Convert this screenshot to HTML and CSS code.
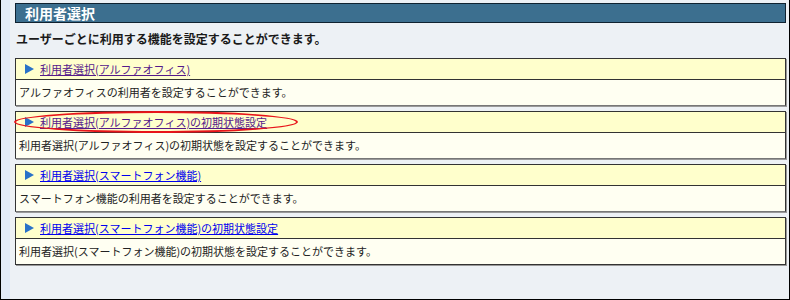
FILE: index.html
```html
<!DOCTYPE html>
<html lang="ja">
<head>
    <meta charset="UTF-8">
    <title>利用者選択</title>
    <link rel="stylesheet" href="styles.css">
</head>
<body>
<div class="frame">
    <div class="side"></div>
    <div class="main">
        <h1 class="title">利用者選択</h1>
        <p class="lead">ユーザーごとに利用する機能を設定することができます。</p>

        <div class="item">
            <div class="item-head">
                <svg class="arrow" width="9" height="10" viewBox="0 0 9 10"><polygon points="0,0 9,5 0,10" fill="#2a72c8"/></svg>
                <a href="#" class="visited">利用者選択(アルファオフィス)</a>
            </div>
            <div class="item-body">アルファオフィスの利用者を設定することができます。</div>
        </div>

        <div class="item">
            <div class="item-head">
                <svg class="arrow" width="9" height="10" viewBox="0 0 9 10"><polygon points="0,0 9,5 0,10" fill="#2a72c8"/></svg>
                <a href="#" class="visited">利用者選択(アルファオフィス)の初期状態設定</a>
                <span class="mark"></span>
            </div>
            <div class="item-body">利用者選択(アルファオフィス)の初期状態を設定することができます。</div>
        </div>

        <div class="item">
            <div class="item-head">
                <svg class="arrow" width="9" height="10" viewBox="0 0 9 10"><polygon points="0,0 9,5 0,10" fill="#2a72c8"/></svg>
                <a href="#">利用者選択(スマートフォン機能)</a>
            </div>
            <div class="item-body">スマートフォン機能の利用者を設定することができます。</div>
        </div>

        <div class="item last">
            <div class="item-head">
                <svg class="arrow" width="9" height="10" viewBox="0 0 9 10"><polygon points="0,0 9,5 0,10" fill="#2a72c8"/></svg>
                <a href="#">利用者選択(スマートフォン機能)の初期状態設定</a>
            </div>
            <div class="item-body">利用者選択(スマートフォン機能)の初期状態を設定することができます。</div>
        </div>
    </div>
</div>
</body>
</html>
```

FILE: styles.css
```css
body {
    margin: 0;
    font-family: "Noto Sans CJK JP", "Liberation Sans", sans-serif;
    font-size: 11px;
    color: #222;
}

.frame {
    display: flex;
    height: 300px;
    box-sizing: border-box;
    border: 1px solid #000;
    border-top: none;
    background-color: #edf1f5;
}

.side {
    width: 9px;
    background-color: #e3ebf8;
}

.main {
    flex: 1;
    padding: 3px 3px 0 5px;
}

.title {
    margin: 0;
    height: 18px;
    line-height: 18px;
    padding-left: 9px;
    font-size: 14px;
    font-weight: bold;
    color: #fff;
    background-color: #3c6f8f;
    border: 1px solid #0f2230;
}

.lead {
    margin: 0;
    padding: 7px 0 0 1px;
    height: 28px;
    line-height: 18px;
    font-size: 12px;
    font-weight: bold;
    color: #1a1a1a;
}

.item {
    margin-bottom: 5px;
    border: 1px solid #333;
    border-bottom-color: #777;
    box-shadow: 1px 1px 0 #999;
}

.item.last {
    border-bottom-color: #333;
}

.item-head {
    position: relative;
    display: flex;
    align-items: center;
    height: 20px;
    padding-left: 9px;
    background-color: #ffffcc;
    border-bottom: 1px solid #333;
}

.arrow {
    margin-right: 6px;
}

.item-head a {
    color: #0000ee;
    line-height: 16px;
}

.item-head a.visited {
    color: #551a8b;
}

.item-body {
    height: 25px;
    line-height: 25px;
    padding-left: 3px;
    background-color: #fffff2;
}

.mark {
    position: absolute;
    left: -2px;
    top: -1px;
    width: 280px;
    height: 18px;
    border: 2px solid #e8141a;
    border-radius: 50%;
}
```
